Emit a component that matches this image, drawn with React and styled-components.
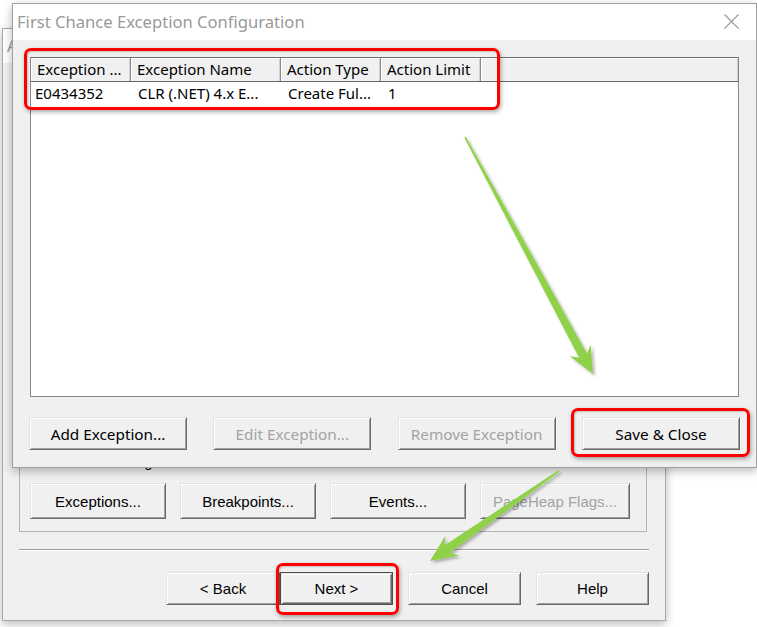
import React from 'react'
import styled, { createGlobalStyle } from 'styled-components'

const GlobalStyle = createGlobalStyle`
  html, body {
    margin: 0;
    padding: 0;
    background: #ffffff;
  }
`

const UI_FONT = `"Noto Sans", "Open Sans", sans-serif`
const OLD_FONT = `"Liberation Sans", Arial, sans-serif`

const Desktop = styled.div`
  position: relative;
  width: 757px;
  height: 627px;
  overflow: hidden;
  background: #ffffff;
`

const Window = styled.div`
  position: absolute;
  box-sizing: border-box;
  left: ${p => p.$x}px;
  top: ${p => p.$y}px;
  width: ${p => p.$w}px;
  height: ${p => p.$h}px;
  display: flex;
  flex-direction: column;
  background: #f0f0f0;
  border: 1px solid ${p => p.$border || '#a9a9a9'};
  box-shadow: 0 3px 9px rgba(0, 0, 0, 0.28);
`

const TitleBar = styled.div`
  display: flex;
  align-items: center;
  justify-content: space-between;
  height: ${p => p.$h || 36}px;
  flex: none;
  padding: 0 ${p => p.$pr || 0}px 1px ${p => p.$pl || 4}px;
  box-sizing: border-box;
  background: #ffffff;
  color: #999999;
  font-family: ${UI_FONT};
  font-size: 16.6px;
  white-space: nowrap;
  overflow: hidden;
`

const CloseIcon = () => (
  <svg width="15" height="15" viewBox="0 0 15 15">
    <path d="M0.5 0.5 L14.5 14.5 M14.5 0.5 L0.5 14.5" stroke="#9a9a9a" strokeWidth="1.1" />
  </svg>
)

const DialogBody = styled.div`
  flex: 1;
  display: flex;
  flex-direction: column;
  padding: 17px 17px 17px;
  min-height: 0;
`

const ListView = styled.div`
  flex: 1;
  background: #ffffff;
  border: 1px solid #828790;
  border-top-color: #6f6f6f;
  display: flex;
  flex-direction: column;
  font-family: ${UI_FONT};
  font-size: 15px;
  color: #000;
`

const HeaderRow = styled.div`
  display: flex;
  height: 23px;
  background: #f0f0f0;
  border-bottom: 1px solid #696969;
  box-shadow: inset 0 1px 0 #a0a0a0;
`

const HeaderCell = styled.div`
  box-sizing: border-box;
  width: ${p => p.$w}px;
  flex: ${p => (p.$fill ? 1 : 'none')};
  padding-left: 6px;
  padding-bottom: 1px;
  display: flex;
  align-items: center;
  border-right: ${p => (p.$fill ? 'none' : '1px solid #8a8a8a')};
  box-shadow: inset 1px 1px 0 #ffffff, inset -1px 0 0 #cfcfcf;
  white-space: nowrap;
  overflow: hidden;
`

const Row = styled.div`
  display: flex;
  height: 22px;
  align-items: center;
`

const Cell = styled.div`
  box-sizing: border-box;
  width: ${p => p.$w}px;
  padding-left: ${p => p.$pl ?? 7}px;
  white-space: nowrap;
  overflow: hidden;
`

const ButtonRow = styled.div`
  display: flex;
  align-items: center;
  justify-content: ${p => p.$justify || 'flex-start'};
  gap: ${p => p.$gap || 0}px;
  margin: ${p => p.$margin || '0'};
`

const Button = styled.button`
  box-sizing: border-box;
  flex: none;
  width: ${p => p.$w}px;
  height: ${p => p.$h}px;
  padding: 0;
  margin: 0 0 0 ${p => p.$ml || 0}px;
  background: #f0f0f0;
  font-family: ${p => (p.$old ? OLD_FONT : UI_FONT)};
  font-size: ${p => (p.$old ? 15 : 15.3)}px;
  color: ${p => (p.$disabled ? '#a3a3a3' : '#000000')};
  border: 1px solid;
  border-color: ${p => (p.$default ? '#505050' : '#e3e3e3 #696969 #696969 #e3e3e3')};
  box-shadow: ${p =>
    p.$default
      ? 'inset 1px 1px 0 #e3e3e3, inset -1px -1px 0 #696969, inset 2px 2px 0 #ffffff, inset -2px -2px 0 #a0a0a0'
      : 'inset 1px 1px 0 #ffffff, inset -1px -1px 0 #a0a0a0'};
  cursor: default;
`

const BgBody = styled.div`
  flex: 1;
  display: flex;
  flex-direction: column;
  justify-content: flex-end;
  padding: 0 18px 15px 16px;
`

const GroupBox = styled.fieldset`
  margin: 0;
  padding: 13px 10px 12px;
  border: 1px solid #b4b4b4;
  min-width: 0;
`

const GroupLabel = styled.legend`
  margin-left: 3px;
  padding: 0 2px;
  font-family: ${OLD_FONT};
  font-size: 15px;
  color: #000;
`

const Separator = styled.div`
  height: 1px;
  margin: 17px -2px 21px 0;
  background: #a0a0a0;
  border-bottom: 1px solid #ffffff;
`

const RedBox = styled.div`
  position: absolute;
  box-sizing: border-box;
  left: ${p => p.$x}px;
  top: ${p => p.$y}px;
  width: ${p => p.$w}px;
  height: ${p => p.$h}px;
  border: 3px solid #ff0000;
  border-radius: 7px;
  box-shadow: 1px 2px 4px rgba(0, 0, 0, 0.35), inset 1px 1px 2px rgba(0, 0, 0, 0.2);
  pointer-events: none;
`

const Overlay = styled.svg`
  position: absolute;
  left: 0;
  top: 0;
  pointer-events: none;
`

const arrowPoints = (x1, y1, x2, y2, { headLen, headHalf, neckHalf, tailHalf, notch }) => {
  const dx = x2 - x1
  const dy = y2 - y1
  const L = Math.hypot(dx, dy)
  const ux = dx / L
  const uy = dy / L
  const nx = -uy
  const ny = ux
  const p = (d, w) => `${(x1 + ux * d + nx * w).toFixed(1)},${(y1 + uy * d + ny * w).toFixed(1)}`
  return [
    p(0, tailHalf),
    p(L - headLen + notch, neckHalf),
    p(L - headLen, headHalf),
    p(L, 0),
    p(L - headLen, -headHalf),
    p(L - headLen + notch, -neckHalf),
    p(0, -tailHalf)
  ].join(' ')
}

const arrows = [
  { from: [465, 137], to: [593, 374] },
  { from: [559, 471], to: [430, 561] }
]

const columns = [
  { title: 'Exception ...', w: 100, value: 'E0434352', pl: 4 },
  { title: 'Exception Name', w: 150, value: 'CLR (.NET) 4.x E...' },
  { title: 'Action Type', w: 100, value: 'Create Ful...' },
  { title: 'Action Limit', w: 100, value: '1' }
]

export default function App() {
  return (
    <Desktop>
      <GlobalStyle />

      <Window $x={2} $y={28} $w={664} $h={593}>
        <TitleBar $h={34} $pl={4}>Advanced Configuration</TitleBar>
        <BgBody>
          <GroupBox>
            <GroupLabel>Advanced Settings</GroupLabel>
            <ButtonRow $gap={14}>
              <Button $old $w={136} $h={36}>Exceptions...</Button>
              <Button $old $w={136} $h={36}>Breakpoints...</Button>
              <Button $old $w={136} $h={36}>Events...</Button>
              <Button $old $disabled $w={150} $h={36}>PageHeap Flags...</Button>
            </ButtonRow>
          </GroupBox>
          <Separator />
          <ButtonRow $justify="flex-end" $margin="0 -2px 0 0">
            <Button $old $w={114} $h={33}>&lt; Back</Button>
            <Button $old $default $w={113} $h={33}>Next &gt;</Button>
            <Button $old $w={113} $h={33} $ml={15}>Cancel</Button>
            <Button $old $w={113} $h={33} $ml={15}>Help</Button>
          </ButtonRow>
        </BgBody>
      </Window>

      <Window $x={12} $y={3} $w={745} $h={465} $border="#a0a0a0">
        <TitleBar $pl={4} $pr={17}>
          <span>First Chance Exception Configuration</span>
          <CloseIcon />
        </TitleBar>
        <DialogBody>
          <ListView>
            <HeaderRow>
              {columns.map(c => (
                <HeaderCell key={c.title} $w={c.w}>{c.title}</HeaderCell>
              ))}
              <HeaderCell $fill />
            </HeaderRow>
            <Row>
              {columns.map(c => (
                <Cell key={c.title} $w={c.w} $pl={c.pl}>{c.value}</Cell>
              ))}
            </Row>
          </ListView>
          <ButtonRow $justify="space-between" $margin="20px -1px 0">
            <Button $w={158} $h={33}>Add Exception...</Button>
            <Button $disabled $w={158} $h={33}>Edit Exception...</Button>
            <Button $disabled $w={158} $h={33}>Remove Exception</Button>
            <Button $w={158} $h={33}>Save &amp; Close</Button>
          </ButtonRow>
        </DialogBody>
      </Window>

      <Overlay width="757" height="627" viewBox="0 0 757 627">
        <defs>
          <filter id="arrowShadow" x="-20%" y="-20%" width="140%" height="140%">
            <feDropShadow dx="2" dy="2" stdDeviation="1.6" floodColor="#000" floodOpacity="0.3" />
          </filter>
        </defs>
        {arrows.map((a, i) => (
          <polygon
            key={i}
            points={arrowPoints(a.from[0], a.from[1], a.to[0], a.to[1], {
              headLen: 27,
              headHalf: 12,
              neckHalf: 4.5,
              tailHalf: 0.8,
              notch: 6
            })}
            fill="#8fd14a"
            filter="url(#arrowShadow)"
          />
        ))}
      </Overlay>

      <RedBox $x={24} $y={48} $w={476} $h={62} />
      <RedBox $x={571} $y={408} $w={179} $h={49} />
      <RedBox $x={276} $y={563} $w={123} $h={52} />
    </Desktop>
  )
}
